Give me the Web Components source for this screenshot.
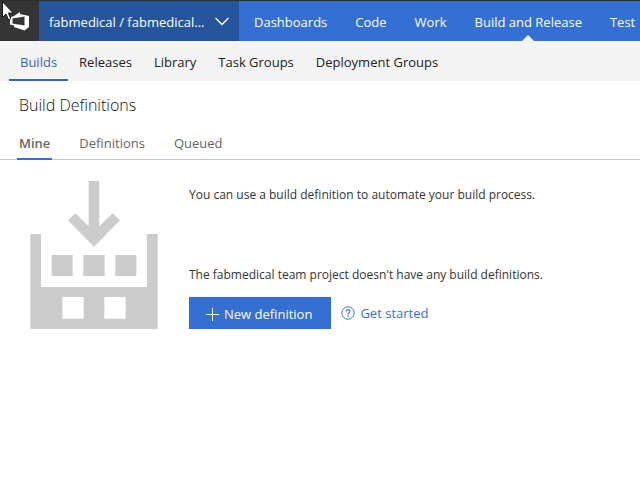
<!DOCTYPE html>
<html lang="en">
<head>
<meta charset="utf-8">
<title>Build Definitions</title>
<style>
body { margin: 0; background: #fff; color: #333; font-family: "Segoe UI", "Open Sans", "Noto Sans", sans-serif; font-size: 13px; line-height: 20px; overflow-x: hidden; }
</style>
</head>
<body>
<build-page></build-page>
<script>
const define = (name, html) => customElements.define(name, class extends HTMLElement {
  constructor() {
    super();
    const t = document.createElement('template');
    t.innerHTML = html;
    this.attachShadow({ mode: 'open' }).append(t.content.cloneNode(true));
  }
});

/* Link used by all three levels of navigation; the bar it sits in styles it. */
customElements.define('nav-link', class extends HTMLElement {
  constructor() {
    super();
    this.attachShadow({ mode: 'open' }).innerHTML = `
      <style>
        :host { display: flex; flex: none; position: relative; }
        a { display: flex; align-items: center; white-space: nowrap; color: inherit; text-decoration: none; }
        :host([kind=hub]) a { padding: 2px 14px 0; }
        :host([kind=hub][active])::after { content: ""; position: absolute; left: 50%; bottom: 0; margin-left: -6px; border: 6px solid transparent; border-top: 0; border-bottom-color: #f4f4f4; }
        :host([kind=sub]) a { padding: 3px 11px 0; border-bottom: 2px solid transparent; }
        :host([kind=sub][active]) a { color: #3366c0; border-color: #3366c0; }
        :host([kind=tab]) a { padding: 0 2px 5px; border-bottom: 2px solid transparent; color: #666; }
        :host([kind=tab][active]) a { font-weight: 600; border-color: #346fd3; }
      </style>
      <a href="#"><slot></slot></a>`;
  }
  connectedCallback() {
    if (this.hasAttribute('active')) this.shadowRoot.querySelector('a').setAttribute('aria-current', 'page');
  }
});

define('mouse-pointer', `
  <style>
    :host { position: absolute; left: 2px; top: 1px; pointer-events: none; }
    svg { display: block; }
  </style>
  <svg width="12" height="20" viewBox="0 0 12 20" aria-hidden="true"><path d="M.5 .8v15.600l3.500-3.400 2.400 5.700 2.400-1-2.400-5.600h4.900z" fill="#fff" stroke="#111" stroke-width="1"/></svg>`);

define('top-bar', `
  <style>
    :host { display: flex; height: 40px; border-top: 1px solid #2d2d30; background: #346fd3; color: #fff; overflow: hidden; }
    .logo { flex: none; width: 39px; background: #353535; display: flex; align-items: center; justify-content: center; }
    .project { flex: none; width: 200px; display: flex; align-items: center; gap: 8px; padding: 2px 9px 0 10px; border: 0; background: #27559c; color: inherit; font: inherit; text-align: left; }
    .project span { flex: 1; white-space: nowrap; }
    .project svg { flex: none; }
    nav { display: flex; padding-left: 1px; }
  </style>
  <a class="logo" href="#" aria-label="Home"><svg width="21" height="20" viewBox="0 0 21 20"><path fill="#fff" fill-rule="evenodd" d="M1 6.500 5 5 11 1v2l9 2v11l-4.500 3.500L5 16v-1.500L1 13.500zM3.500 7.500v5L15.500 14.500V5.500z"/></svg></a>
  <button class="project" type="button" aria-haspopup="true"><span>fabmedical / fabmedical...</span><svg width="16" height="10" viewBox="0 0 16 10" aria-hidden="true"><path d="M1.500 1 8 7.500 14.500 1" fill="none" stroke="#fff" stroke-width="1.300"/></svg></button>
  <nav aria-label="Hubs">
    <nav-link kind="hub">Dashboards</nav-link>
    <nav-link kind="hub">Code</nav-link>
    <nav-link kind="hub">Work</nav-link>
    <nav-link kind="hub" active>Build and Release</nav-link>
    <nav-link kind="hub">Test</nav-link>
  </nav>`);

define('sub-bar', `
  <style>
    :host { display: flex; height: 40px; padding-left: 9px; background: #f4f4f4; color: #222; overflow: hidden; }
    nav { display: flex; }
  </style>
  <nav aria-label="Build and Release">
    <nav-link kind="sub" active>Builds</nav-link>
    <nav-link kind="sub">Releases</nav-link>
    <nav-link kind="sub">Library</nav-link>
    <nav-link kind="sub">Task Groups</nav-link>
    <nav-link kind="sub">Deployment Groups</nav-link>
  </nav>`);

define('view-tabs', `
  <style>
    :host { display: block; border-bottom: 1px solid #c8c8c8; }
    nav { display: flex; gap: 25px; padding-left: 17px; margin-bottom: -1px; }
  </style>
  <nav aria-label="Views">
    <nav-link kind="tab" active>Mine</nav-link>
    <nav-link kind="tab">Definitions</nav-link>
    <nav-link kind="tab">Queued</nav-link>
  </nav>`);

define('build-art', `
  <style>:host { display: block; flex: none; } svg { display: block; }</style>
  <svg width="128" height="148" viewBox="30 33 384 444" fill="#ccc" aria-hidden="true">
    <path d="M206 33h32v136l40-39 22 21-78 79-78-79 22-21 40 39z"/>
    <path d="M95 255h63v63H95zM190 255h64v63h-64zM286 255h63v63h-63z"/>
    <path fill-rule="evenodd" d="M31 192h32v159h318V192h32v285H31zM127 381v65h64v-65zM253 381v65h64v-65z"/>
  </svg>`);

define('new-button', `
  <style>
    :host { display: block; }
    button { display: flex; align-items: center; gap: 5px; height: 32px; padding: 2px 19px 0 17px; border: 0; background: #346fd3; color: #fff; font: inherit; white-space: nowrap; }
    svg { display: block; }
  </style>
  <button type="button"><svg width="13" height="13" viewBox="0 0 13 13" aria-hidden="true"><path d="M6.500 0v13M0 6.500h13" stroke="#fff"/></svg><slot></slot></button>`);

define('help-link', `
  <style>
    :host { display: block; }
    a { display: flex; align-items: center; gap: 5px; color: #346fd3; text-decoration: none; white-space: nowrap; }
    svg { display: block; }
  </style>
  <a href="#"><svg width="14" height="14" viewBox="0 0 14 14" fill="none" stroke="#346fd3" aria-hidden="true"><circle cx="7" cy="7" r="6.200"/><path d="M5.200 5.400C5.200 3 8.900 3 8.900 5.300 8.900 6.700 7.100 6.800 7.100 8.400M7.100 9.600v1.300" stroke-width="1.100"/></svg><slot></slot></a>`);

define('build-page', `
  <style>
    :host { display: block; }
    h1 { margin: 0; padding: 14px 19px 18px; font-size: 16px; line-height: 20px; font-weight: 300; color: #111; }
    main { display: flex; gap: 31px; padding: 21px 30px; }
    .info { flex: 1; font-size: 12px; color: #333; }
    p { margin: 0; padding-top: 4px; }
    p + p { padding-top: 60px; }
    .actions { display: flex; align-items: center; gap: 10px; margin-top: 12px; font-size: 13px; }
  </style>
  <top-bar></top-bar>
  <sub-bar></sub-bar>
  <h1>Build Definitions</h1>
  <view-tabs></view-tabs>
  <main>
    <build-art></build-art>
    <div class="info">
      <p>You can use a build definition to automate your build process.</p>
      <p>The fabmedical team project doesn't have any build definitions.</p>
      <div class="actions"><new-button>New definition</new-button><help-link>Get started</help-link></div>
    </div>
  </main>
  <mouse-pointer></mouse-pointer>`);
</script>
</body>
</html>
